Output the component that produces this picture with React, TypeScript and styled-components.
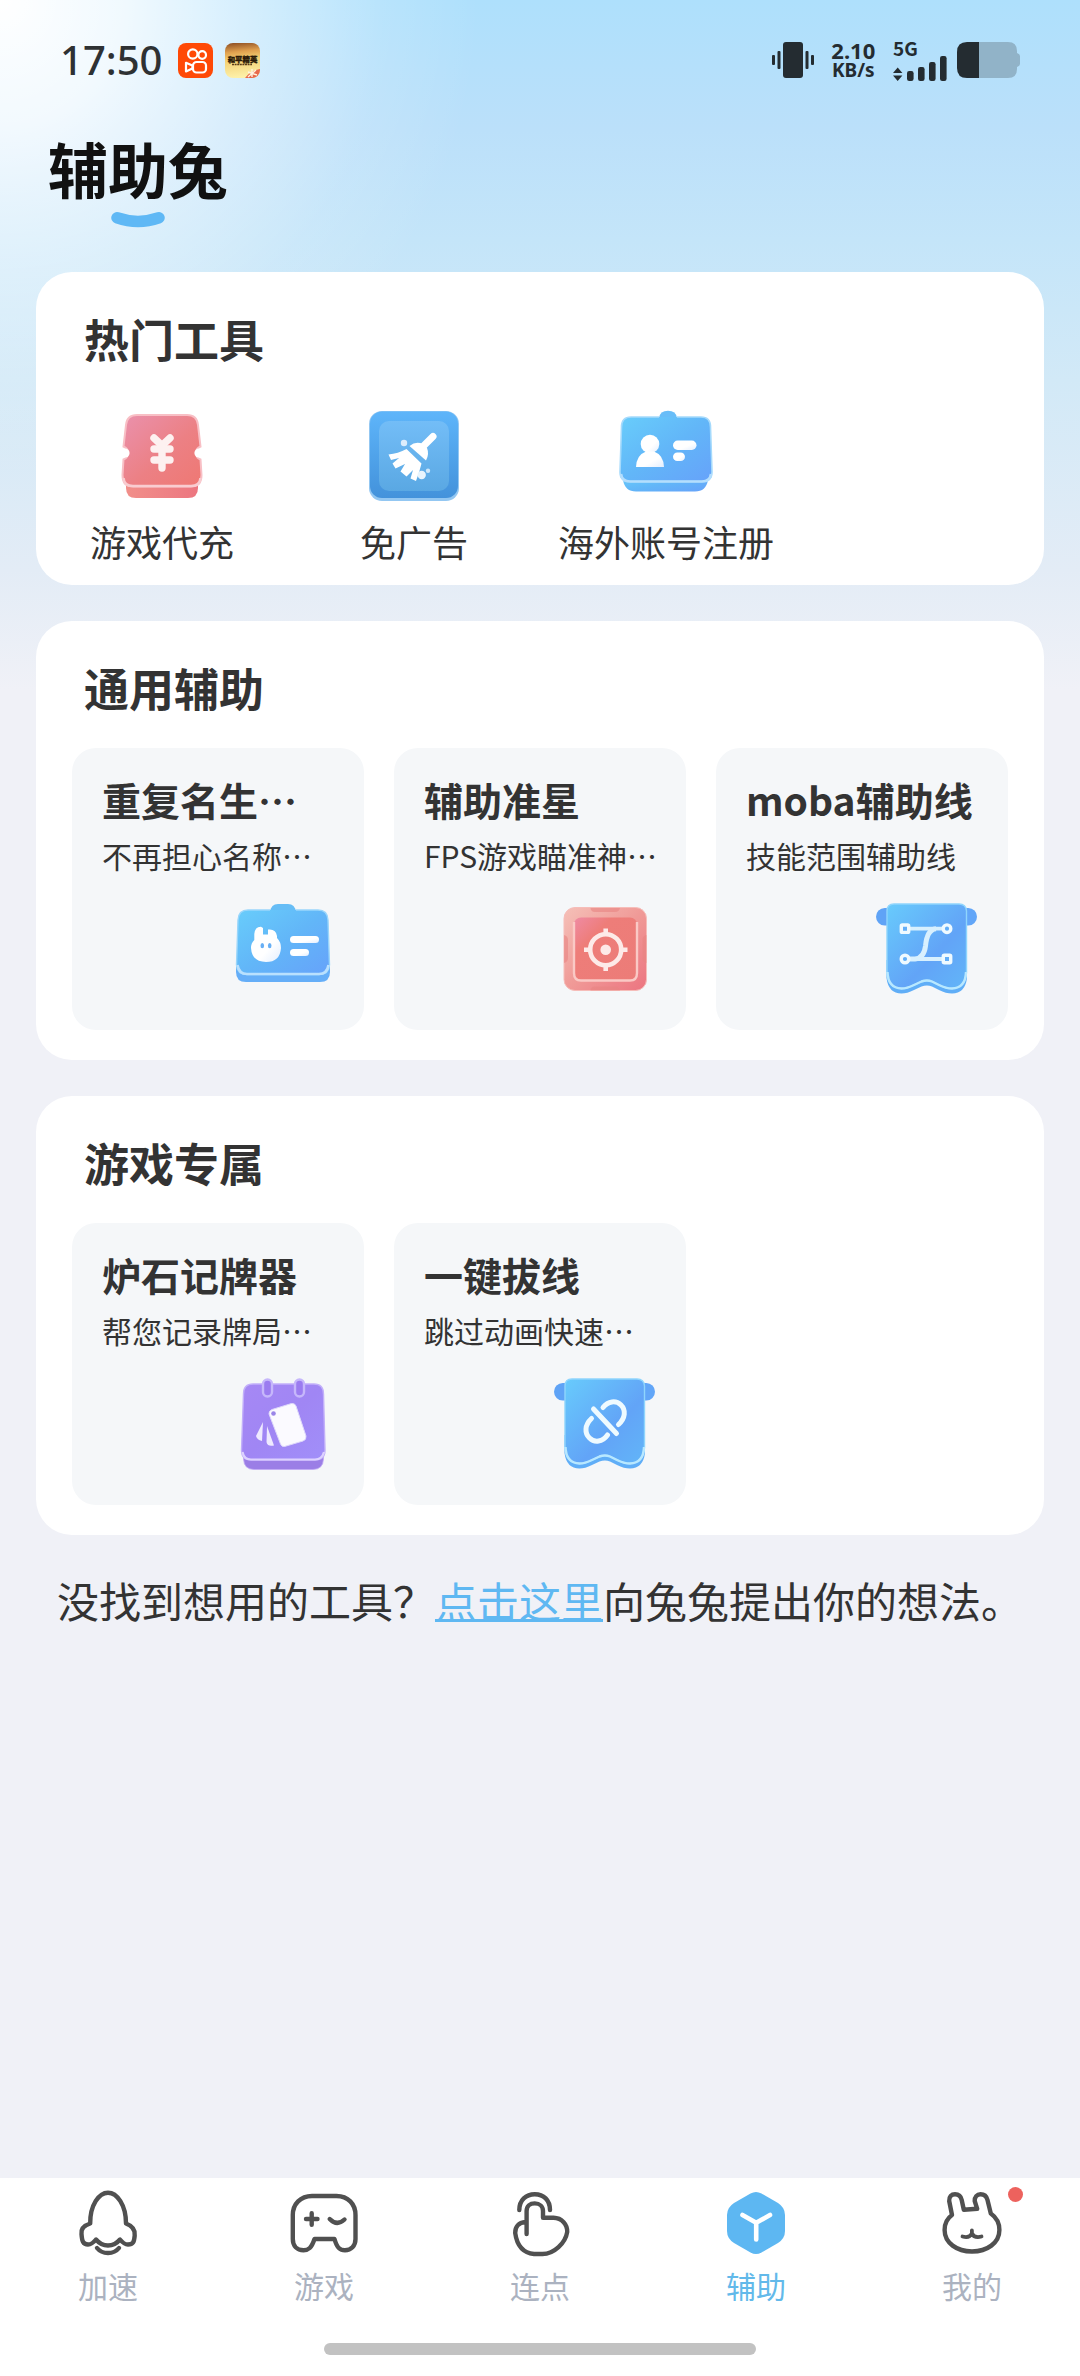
import React from "react";
import styled, { createGlobalStyle } from "styled-components";

const GlobalStyle = createGlobalStyle`
  *, *::before, *::after { box-sizing: border-box; }
  body {
    margin: 0;
    background: #f0f1f7;
    color: #333;
    font-family: "Noto Sans CJK SC", "Noto Sans", sans-serif;
  }
  button {
    margin: 0;
    padding: 0;
    border: 0;
    background: none;
    color: inherit;
    font: inherit;
    cursor: pointer;
  }
  svg { display: block; flex: none; }
`;

const Page = styled.div`
  display: flex;
  flex-direction: column;
  min-height: 100vh;
  background:
    radial-gradient(circle 480px at 0 0, #fff 0%, rgba(255, 255, 255, 0.82) 26%, rgba(255, 255, 255, 0.42) 56%, rgba(255, 255, 255, 0.12) 80%, rgba(255, 255, 255, 0) 100%),
    linear-gradient(180deg, #aee0fc 0, #bbe0fa 130px, #c4e5f9 240px, #d2e9f7 380px, #e3ecf6 570px, #f0f1f7 690px);
`;

/* ---------- status bar ---------- */

const StatusBar = styled.header`
  display: flex;
  align-items: center;
  justify-content: space-between;
  height: 120px;
  padding: 0 60px;
`;

const StatusGroup = styled.div<{ $gap: number }>`
  display: flex;
  align-items: center;
  gap: ${(p) => p.$gap}px;
`;

const Clock = styled.time`
  margin-right: 4px;
  color: #2e3133;
  font-family: "Noto Sans", "Noto Sans CJK SC", sans-serif;
  font-size: 40px;
  font-weight: 500;
  line-height: 48px;
`;

const Speed = styled.div`
  color: #242c31;
  font-family: "Noto Sans", "Noto Sans CJK SC", sans-serif;
  font-size: 19px;
  font-weight: 700;
  line-height: 20px;
  text-align: center;
  white-space: pre-line;

  &::first-line {
    font-size: 22px;
  }
`;

const Signal = styled.div`
  display: flex;
  flex-direction: column;
  color: #242c31;
  font-size: 19px;
  font-weight: 700;
  line-height: 16px;
`;

/* ---------- heading ---------- */

const Heading = styled.div`
  display: flex;
  flex-direction: column;
  align-items: center;
  align-self: flex-start;
  gap: 8px;
  padding: 12px 48px 44px;
`;

const AppTitle = styled.h1`
  margin: 0;
  color: #111;
  font-size: 60px;
  font-weight: 700;
  line-height: 72px;
`;

/* ---------- cards ---------- */

const Content = styled.main`
  display: flex;
  flex: 1;
  flex-direction: column;
  gap: 36px;
  padding: 0 36px;
`;

const Card = styled.section`
  padding: 35px 36px 30px;
  border-radius: 36px;
  background: #fff;
`;

const CardTitle = styled.h2`
  margin: 0 0 28px;
  padding: 0 12px;
  font-size: 45px;
  font-weight: 700;
  line-height: 64px;
`;

const HotCard = styled(Card)`
  padding: 35px 0 20px;
`;

const HotTitle = styled(CardTitle)`
  margin-bottom: 37px;
  padding: 0 48px;
`;

const HotGrid = styled.div`
  display: grid;
  grid-template-columns: repeat(4, 1fr);
`;

const HotTool = styled.button`
  display: flex;
  flex-direction: column;
  align-items: center;
  gap: 13px;
  font-size: 36px;
  line-height: 48px;
  white-space: nowrap;
`;

const TileGrid = styled.div`
  display: grid;
  grid-template-columns: repeat(3, 1fr);
  gap: 30px;
`;

const TileButton = styled.button`
  display: flex;
  flex-direction: column;
  min-width: 0;
  padding: 27px 30px 28px;
  border-radius: 24px;
  background: #f5f7f9;
  text-align: left;
  white-space: nowrap;

  svg {
    align-self: flex-end;
    margin-top: 25px;
  }
`;

const TileName = styled.span`
  font-size: 39px;
  font-weight: 700;
  line-height: 48px;
`;

const TileNote = styled.span`
  margin-top: 12px;
  font-size: 30px;
  line-height: 40px;
`;

const Feedback = styled.p`
  margin: 0;
  font-size: 42px;
  line-height: 58px;
  text-align: center;
`;

const FeedbackLink = styled.a`
  color: #5fb8f2;
  text-decoration: underline;
  text-decoration-thickness: 3px;
  text-underline-offset: 1px;
`;

/* ---------- tab bar ---------- */

const Footer = styled.footer`
  display: flex;
  flex-direction: column;
  align-items: center;
  gap: 38px;
  padding: 10px 0 21px;
  background: #fff;
`;

const TabBar = styled.nav`
  display: grid;
  grid-template-columns: repeat(5, 1fr);
  width: 100%;
`;

const Tab = styled.button<{ $active?: boolean }>`
  display: flex;
  flex-direction: column;
  align-items: center;
  gap: 5px;
  color: ${(p) => (p.$active ? "#62b9ea" : "#abb2c0")};
  font-size: 30px;
  line-height: 40px;
`;

const TabIcon = styled.span`
  position: relative;
`;

const Badge = styled.span`
  position: absolute;
  top: -1px;
  right: -15px;
  width: 15px;
  height: 15px;
  border-radius: 50%;
  background: #ed625d;
`;

const HomeIndicator = styled.div`
  width: 40%;
  height: 12px;
  border-radius: 6px;
  background: #c2c2c2;
`;

/* ---------- status icons ---------- */

const VideoAppIcon = () => (
  <svg width="35" height="35" viewBox="0 0 35 35" aria-hidden="true">
    <rect width="35" height="35" rx="8" fill="#ff4906" />
    <g fill="none" stroke="#fff" strokeWidth="2.2" strokeLinejoin="round">
      <circle cx="14.8" cy="11" r="4.7" />
      <circle cx="24.2" cy="12" r="3.8" />
      <rect x="15" y="19" width="13" height="10.5" rx="3.6" />
      <path d="M8 19.8V28.4L14.4 25.4V22.6Z" />
    </g>
  </svg>
);

const GameAppIcon = () => (
  <svg width="35" height="35" viewBox="0 0 35 35" aria-hidden="true">
    <defs>
      <linearGradient id="gameBg" x1="0" y1="0" x2="0.1" y2="1">
        <stop offset="0" stopColor="#8a4b22" />
        <stop offset="0.28" stopColor="#e0a04e" />
        <stop offset="0.5" stopColor="#f3cf72" />
        <stop offset="1" stopColor="#fdf0a8" />
      </linearGradient>
      <clipPath id="gameClip"><rect width="35" height="35" rx="8" /></clipPath>
    </defs>
    <g clipPath="url(#gameClip)">
      <rect width="35" height="35" fill="url(#gameBg)" />
      <path d="M35 26Q25 28 20 35H35Z" fill="#e8694c" />
      <path d="M27 26V34M23 29L32 32M31 27L23 34" stroke="#fff3e0" strokeWidth="1.4" />
      <text x="17.5" y="18.5" textAnchor="middle" fontSize="7.4" fontWeight="900" fill="#2b1a08" stroke="#2b1a08" strokeWidth="0.4">和平精英</text>
      <path d="M7 21.5H27" stroke="#5a3c18" strokeWidth="1.6" strokeDasharray="2 0.6" />
    </g>
  </svg>
);

const VibrateIcon = () => (
  <svg width="42" height="36" viewBox="0 0 42 36" fill="#242c31" aria-hidden="true">
    <rect x="11" width="20" height="36" rx="3" />
    <rect y="13" width="3" height="10" rx="1" />
    <rect x="5.5" y="9" width="3" height="18" rx="1" />
    <rect x="33.5" y="9" width="3" height="18" rx="1" />
    <rect x="39" y="13" width="3" height="10" rx="1" />
  </svg>
);

const SignalBars = () => (
  <svg width="54" height="25" viewBox="0 0 54 25" fill="#242c31" aria-hidden="true">
    <path d="M0 17L4.7 11.5L9.4 17ZM0 19.5L4.7 25L9.4 19.5Z" />
    <rect x="14" y="15" width="6.6" height="10" rx="2.2" />
    <rect x="25" y="11" width="6.6" height="14" rx="2.2" />
    <rect x="36" y="6" width="6.6" height="19" rx="2.2" />
    <rect x="47" y="0" width="6.6" height="25" rx="2.2" />
  </svg>
);

const BatteryIcon = () => (
  <svg width="63" height="36" viewBox="0 0 63 36" aria-hidden="true">
    <path d="M22 0H51Q60 0 60 9V11Q63 12 63 14V22Q63 24 60 25V27Q60 36 51 36H22Z" fill="#91b3c8" />
    <path d="M22 0V36H10Q0 36 0 26V10Q0 0 10 0Z" fill="#242c31" />
  </svg>
);

const Smile = () => (
  <svg width="56" height="16" viewBox="0 0 56 16" aria-hidden="true">
    <path d="M7 5.8Q28 13 49 5.8" fill="none" stroke="#5fb8f5" strokeWidth="11.5" strokeLinecap="round" />
  </svg>
);

/* ---------- shared gradients for the tool icons ---------- */

const GradientSheet = styled.svg`
  position: absolute;
`;

const Gradients = () => (
  <GradientSheet width="0" height="0" aria-hidden="true">
    <defs>
      <linearGradient id="rose" x1="0" y1="0" x2="1" y2="1">
        <stop offset="0" stopColor="#ea91ad" />
        <stop offset="0.55" stopColor="#ec8084" />
        <stop offset="1" stopColor="#ef7873" />
      </linearGradient>
      <linearGradient id="roseBase" x1="0" y1="0" x2="1" y2="0">
        <stop offset="0" stopColor="#f18f8a" />
        <stop offset="1" stopColor="#ec7680" />
      </linearGradient>
      <linearGradient id="roseFrame" x1="0" y1="0" x2="1" y2="1">
        <stop offset="0" stopColor="#f5c0b8" />
        <stop offset="0.5" stopColor="#f09a97" />
        <stop offset="1" stopColor="#ec7480" />
      </linearGradient>
      <linearGradient id="roseFace" x1="0" y1="0" x2="1" y2="1">
        <stop offset="0" stopColor="#ef8ba4" />
        <stop offset="0.3" stopColor="#ee7d79" />
        <stop offset="1" stopColor="#ec7c78" />
      </linearGradient>
      <linearGradient id="sky" x1="0" y1="0" x2="1" y2="1">
        <stop offset="0" stopColor="#68cdfb" />
        <stop offset="0.5" stopColor="#62b6f8" />
        <stop offset="1" stopColor="#66a2fa" />
      </linearGradient>
      <linearGradient id="banner" x1="0" y1="0" x2="1" y2="1">
        <stop offset="0" stopColor="#68cbfc" />
        <stop offset="0.6" stopColor="#62a4f7" />
        <stop offset="1" stopColor="#62b5f8" />
      </linearGradient>
      <linearGradient id="frame" x1="0" y1="0" x2="0" y2="1">
        <stop offset="0" stopColor="#5eb5fa" />
        <stop offset="1" stopColor="#4392db" />
      </linearGradient>
      <linearGradient id="pane" x1="0" y1="0" x2="0" y2="1">
        <stop offset="0" stopColor="#73bdf7" />
        <stop offset="1" stopColor="#5aa8e3" />
      </linearGradient>
      <linearGradient id="violet" x1="0" y1="0" x2="1" y2="1">
        <stop offset="0" stopColor="#a688f4" />
        <stop offset="0.5" stopColor="#a086f4" />
        <stop offset="1" stopColor="#a18ff9" />
      </linearGradient>
      <linearGradient id="paper" x1="0" y1="0" x2="1" y2="1">
        <stop offset="0" stopColor="#fff" />
        <stop offset="0.6" stopColor="#fff" />
        <stop offset="1" stopColor="#e3eefe" />
      </linearGradient>
    </defs>
  </GradientSheet>
);

/* ---------- hot tool icons ---------- */

const TicketIcon = () => (
  <svg width="96" height="96" viewBox="0 0 96 96" aria-hidden="true">
    <path d="M12 70H84V80Q84 90 74 90H22Q12 90 12 80Z" fill="url(#roseBase)" />
    <path
      d="M23 7H73Q83 7 84 17L86.5 38.5A7 7 0 0 0 86.5 51.5L87.5 67Q87.5 78.5 77 78.5H19Q8.5 78.5 8.5 67L9.5 51.5A7 7 0 0 0 9.5 38.5L12 17Q13 7 23 7Z"
      fill="url(#rose)"
      stroke="#f8bfc5"
      strokeWidth="2"
    />
    <path d="M9.5 70Q10 78 19 78H77Q86 78 86.5 70" fill="none" stroke="#f9ccd0" strokeWidth="2.6" />
    <circle cx="11" cy="45" r="4.6" fill="#fff" />
    <circle cx="85" cy="45" r="4.6" fill="#fff" />
    <g stroke="#fdf1f0" strokeWidth="7.4" strokeLinecap="round" strokeLinejoin="round" fill="none">
      <path d="M40 30L48 37.5L56 30" />
      <path d="M48 38V60" />
      <path d="M40 41H56M40 52H56" />
    </g>
  </svg>
);

const BroomIcon = () => (
  <svg width="96" height="96" viewBox="0 0 96 96" aria-hidden="true">
    <rect x="3" y="3" width="90" height="90" rx="13" fill="#93c7f2" />
    <rect x="4" y="3.5" width="88" height="86.5" rx="12" fill="url(#frame)" />
    <rect x="13" y="13" width="70" height="70" rx="10" fill="url(#pane)" />
    <g fill="#fff">
      <path d="M67 28.5L58 37.5" stroke="#fff" strokeWidth="7" strokeLinecap="round" />
      <path d="M43.5 38Q50 32.5 57 36L61 40Q63.5 46 60 52.5Z" />
      <path d="M40.5 41L55.5 55.5Q53.5 64 50 73L44.5 70.5L47 62L40.5 68.5L34.5 63.5L39 56L29.5 60.5L26.5 55.5L33 50L25 52L22.5 46.5Q32 45.5 40.5 41Z" />
      <circle cx="38" cy="35" r="3.2" fill="#dcedfc" />
      <circle cx="55.7" cy="67" r="4.2" fill="#e8f4fd" />
      <circle cx="62" cy="62.8" r="2.2" fill="#cde6fa" />
    </g>
  </svg>
);

const IdCardIcon = () => (
  <svg width="96" height="96" viewBox="0 0 96 96" aria-hidden="true">
    <path d="M5 68H90V72Q88 83.5 77 83.5H18Q7 83.5 5 72Z" fill="url(#sky)" />
    <path d="M41 10Q42 2.7 50 2.7T59 10V14H41Z" fill="#68bdf8" />
    <path d="M13 9H83Q92.5 9 92.5 19L94 65Q94 74 84 74H12Q2 74 2 65L3.5 19Q3.5 9 13 9Z" fill="url(#sky)" />
    <path d="M41 9H13Q3.5 9 3.5 19L2 64Q2 73.5 12 73.5H84Q94 73.5 94 64L92.5 19Q92.5 9 83 9H59" fill="none" stroke="#a5dafc" strokeWidth="1.6" />
    <path d="M3 66Q4 73.5 12 73.5H84Q92 73.5 93 66" fill="none" stroke="#b4defd" strokeWidth="2.6" />
    <g fill="url(#paper)">
      <circle cx="32" cy="36" r="9.3" />
      <path d="M18 59Q18.5 47 28 43.5H36Q45.5 47 46 59Z" />
      <rect x="55" y="32.5" width="23.5" height="9.5" rx="4.7" />
      <rect x="55" y="44.5" width="12" height="8.6" rx="4.3" />
    </g>
  </svg>
);

/* ---------- tile icons ---------- */

const RabbitCardIcon = () => (
  <svg width="102" height="102" viewBox="0 0 102 102" aria-hidden="true">
    <path d="M4 62H98V72Q98 82 88 82H14Q4 82 4 72Z" fill="#65aef8" />
    <path d="M38 12Q39 4 46 4H56Q63 4 64 12Z" fill="#66bdf6" />
    <path d="M16 10H86Q95.5 10 96 20L97.5 65Q97 75 87 75H15Q5 75 4.5 65L6 20Q6.5 10 16 10Z" fill="url(#sky)" />
    <path d="M38 10H16Q6.5 10 6 20L4.5 65Q5 74.5 15 74.5H87Q97 74.5 97.5 65L96 20Q95.5 10 86 10H64" fill="none" stroke="#9ad6fb" strokeWidth="1.4" />
    <path d="M5.5 65Q7 74 15 74H87Q95 74 96.5 65" fill="none" stroke="#b9e0fe" strokeWidth="2.6" />
    <g fill="url(#paper)">
      <path d="M22.3 40V34Q23 26.5 29 26.7L31 28V34.5H36V29.5Q44 28.5 45 36V38Q49 42 49 48Q48 62 34 62T19 48Q19 43 22.3 40Z" />
      <rect x="58" y="36" width="29" height="7" rx="3.5" />
      <rect x="58" y="49" width="19" height="7" rx="3.5" />
    </g>
    <ellipse cx="30.3" cy="45.7" rx="1.8" ry="2.6" fill="#67aff5" />
    <ellipse cx="37.7" cy="45.7" rx="1.8" ry="2.6" fill="#67aff5" />
  </svg>
);

const CrosshairIcon = () => (
  <svg width="102" height="102" viewBox="0 0 102 102" aria-hidden="true">
    <rect x="10" y="7.5" width="82.5" height="83" rx="11" fill="url(#roseFrame)" stroke="#f6bdb9" strokeWidth="1" />
    <g fill="#e98583" opacity="0.6">
      <path d="M36.5 8H66Q65 12 61 12H41Q37 12 36.5 8Z" />
      <path d="M36.5 90.5H66Q65 86.5 61 86.5H41Q37 86.5 36.5 90.5Z" />
      <path d="M10 35V63Q14 62 14 58V40Q14 36 10 35Z" />
      <path d="M92.5 35V63Q88.5 62 88.5 58V40Q88.5 36 92.5 35Z" />
    </g>
    <rect x="20" y="17.5" width="63" height="63" rx="7" fill="url(#roseFace)" />
    <path d="M20 22V73Q20 80.5 27 80.5H76Q83 80.5 83 73V22" fill="none" stroke="#fac9c5" strokeWidth="2.4" />
    <g fill="none" stroke="#fdeae8" strokeWidth="4.6">
      <circle cx="51.7" cy="49.7" r="15.5" />
      <path d="M51.7 28.5V36M51.7 63.5V71M30 49.7H37.5M66 49.7H73.5" />
    </g>
    <circle cx="51.7" cy="49.7" r="5.3" fill="#fde9e7" />
  </svg>
);

const BannerShape = () => (
  <>
    <rect x="0" y="8" width="20" height="17.5" rx="8.7" fill="#5fa3f6" />
    <rect x="81" y="8" width="20" height="17.5" rx="8.7" fill="#62a6f8" />
    <path d="M10.5 60H91V78Q89 93.5 76 93.5Q70 93.5 63 90L56 86.5Q51 84.5 45.5 86.5L38 90Q31 93.5 25.5 93.5Q12.5 93.5 10.5 78Z" fill="#60aef7" />
    <path d="M18 4H83Q90 4 90.5 11V72Q90 88 76 88.5Q70 88.5 63 85L56 81.5Q51 79.5 45.5 81.5L38 85Q31 88.5 25.5 88.5Q11.5 88 11 72V11Q11 4 18 4Z" fill="url(#banner)" stroke="#8fd5fd" strokeWidth="1.4" />
    <path d="M11.5 72Q12 88 25.5 88.5Q31 88.5 38 85L45.5 81.5Q51 79.5 56 81.5L63 85Q70 88.5 76 88.5Q89.5 88 90 72" fill="none" stroke="#b8e8ff" strokeWidth="2.4" />
  </>
);

const PathBannerIcon = () => (
  <svg width="102" height="102" viewBox="0 0 102 102" aria-hidden="true">
    <BannerShape />
    <g fill="none" stroke="#d8f0fe" strokeWidth="3.8">
      <path d="M33 28.7H67M33 59H67" />
      <path d="M33 59H39Q48 58 49.5 46Q51 29.5 60 28.7" strokeWidth="5" />
    </g>
    <g fill="#62aef8" stroke="#effaff" strokeWidth="3.4">
      <rect x="25.3" y="25" width="7.4" height="7.4" rx="1" />
      <circle cx="71" cy="28.7" r="3.8" />
      <circle cx="29" cy="59" r="3.8" />
      <rect x="67.3" y="55.3" width="7.4" height="7.4" rx="1" />
    </g>
  </svg>
);

const UnlinkBannerIcon = () => (
  <svg width="102" height="102" viewBox="0 0 102 102" aria-hidden="true">
    <BannerShape />
    <g fill="none" stroke="#eefaff" strokeWidth="5" strokeLinecap="round">
      <path d="M39.5 34L62.5 58.5" />
      <path d="M49 32.5C54 26 62 25 67 30S71.5 43 64.5 49.5" />
      <path d="M53.5 60C48.5 67 40.5 68 35.5 63S30.5 50 37.5 43.5" />
    </g>
  </svg>
);

const CardNotesIcon = () => (
  <svg width="102" height="102" viewBox="0 0 102 102" aria-hidden="true">
    <path d="M11.5 72H91.5V84Q91 94.5 81 94.5H22Q12 94.5 11.5 84Z" fill="#9b7ee6" stroke="#c0aaf5" strokeWidth="0.8" />
    <path d="M21 9H82Q91.5 9 91.5 19L93 75Q93 85 83 85H19Q9.5 85 9.5 75L11.5 19Q11.5 9 21 9Z" fill="url(#violet)" stroke="#c2b0fa" strokeWidth="1.4" />
    <path d="M10.5 77Q12 84.5 19 84.5H83Q90 84.5 92 77" fill="none" stroke="#ddd2ff" strokeWidth="2.2" />
    <g fill="#9b7cf0" stroke="#c6b7fb" strokeWidth="2.4">
      <rect x="31" y="4.5" width="9" height="17" rx="4.5" />
      <rect x="63" y="4.5" width="9" height="17" rx="4.5" />
    </g>
    <path d="M31 47L30 66Q25 65 24 61Z" fill="#efeaff" />
    <path d="M35 51L42 70.5Q35.5 72 34.5 67Z" fill="#efeaff" />
    <path d="M40 34.5L59.5 28.5Q63 28 64 31L74 61Q74.5 65 71 66L52.5 71.5Q49.5 72 48.5 69L37 39Q36.5 36 40 34.5Z" fill="#fbfaff" stroke="#ded8fb" strokeWidth="1" />
    <circle cx="41.5" cy="38.5" r="2.3" fill="#9a85e8" />
  </svg>
);

/* ---------- tab icons ---------- */

const LineIcon = ({ children }: { children: React.ReactNode }) => (
  <svg
    width="72"
    height="72"
    viewBox="0 0 72 72"
    fill="none"
    stroke="#505050"
    strokeWidth="4.4"
    strokeLinecap="round"
    strokeLinejoin="round"
    aria-hidden="true"
  >
    {children}
  </svg>
);

const RocketIcon = () => (
  <LineIcon>
    <path d="M18.2 35.5C18 17 27 4.7 36 4.7S54 17 54 35.5C60.5 38 63.5 41.5 62.7 47.5C62.2 54 61 56.5 56 56.5C52 56.5 50 54 48 51.5Q43 57.5 36 57.5T24 51.5C22 54 20 56.5 16 56.5C11 56.5 10 53 9.5 46C8.8 41 12 37.5 18.2 35.5Z" />
    <path d="M25 60Q29 65 36 65T47 60" />
  </LineIcon>
);

const GamepadIcon = () => (
  <LineIcon>
    <path d="M24 8H48.5C60 8 67.5 16 67.5 27V51C67.5 58 63 62.2 57 62.2C52 62.2 49 60 46.5 51H26.5C23.5 60 20.5 62.2 15.5 62.2C9 62.2 4.8 58 4.8 51V27C4.8 16 12.5 8 24 8Z" />
    <path d="M18 31H29.5M23.7 25.2V36.8" />
    <path d="M41.7 31Q49 38.5 56.5 31.5" />
  </LineIcon>
);

const TapIcon = () => (
  <LineIcon>
    <path d="M15.3 22C15.3 12 22 6.2 30.8 6.2S46 12 46 22" />
    <path d="M22.6 46V23C22.6 18 26 15.4 30.8 15.4S39 18.5 39 23V29.8H49.5C58 30 63.5 36.5 63.2 44C61.5 55 50 66 38.5 66H30C20 65 13 58 11.2 45C11 39 14.5 34.5 21.5 34" />
  </LineIcon>
);

const CubeIcon = () => (
  <svg width="72" height="72" viewBox="0 0 72 72" aria-hidden="true">
    <path d="M30.5 5.5Q36 2.5 41.5 5.5L58 15Q65 19.5 65 27V43Q65 50.5 58 55L41.5 64.5Q36 67.5 30.5 64.5L14 55Q7 50.5 7 43V27Q7 19.5 14 15Z" fill="#5db7f2" />
    <path d="M22.5 27L36.2 34.8L50 27M36.2 34.8V51.5" fill="none" stroke="#fff" strokeWidth="4.6" strokeLinecap="round" strokeLinejoin="round" />
  </svg>
);

const RabbitIcon = () => (
  <LineIcon>
    <path d="M16 27L13.2 13C12.8 8.5 15.5 6.2 19 6.2S25 8.5 25.7 12L27.8 21.8L41.2 20.8L38.7 13C38.5 9 41 6.2 44.5 6.2C48.5 6.2 50.5 8 51.5 12L54.8 25.5C60.5 29.5 63.4 35 63.4 42C63.4 55 51 63.5 36 63.5S8.6 55 8.6 42C8.6 36 11 30.5 16 27Z" />
    <path d="M26.5 48.5Q33.5 50.5 35.9 45.5V42.5V45.5Q38.5 50.5 45.5 48.5" strokeWidth="3.8" />
  </LineIcon>
);

/* ---------- page ---------- */

type Tool = { name: string; icon: React.ReactNode };
type TileItem = Tool & { note: string };

const hotTools: Tool[] = [
  { name: "游戏代充", icon: <TicketIcon /> },
  { name: "免广告", icon: <BroomIcon /> },
  { name: "海外账号注册", icon: <IdCardIcon /> },
];

const sections: { title: string; tiles: TileItem[] }[] = [
  {
    title: "通用辅助",
    tiles: [
      { name: "重复名生…", note: "不再担心名称…", icon: <RabbitCardIcon /> },
      { name: "辅助准星", note: "FPS游戏瞄准神…", icon: <CrosshairIcon /> },
      { name: "moba辅助线", note: "技能范围辅助线", icon: <PathBannerIcon /> },
    ],
  },
  {
    title: "游戏专属",
    tiles: [
      { name: "炉石记牌器", note: "帮您记录牌局…", icon: <CardNotesIcon /> },
      { name: "一键拔线", note: "跳过动画快速…", icon: <UnlinkBannerIcon /> },
    ],
  },
];

const tabs: (Tool & { active?: boolean; badge?: boolean })[] = [
  { name: "加速", icon: <RocketIcon /> },
  { name: "游戏", icon: <GamepadIcon /> },
  { name: "连点", icon: <TapIcon /> },
  { name: "辅助", icon: <CubeIcon />, active: true },
  { name: "我的", icon: <RabbitIcon />, badge: true },
];

export default function App() {
  return (
    <Page lang="zh-CN">
      <GlobalStyle />
      <Gradients />
      <StatusBar>
        <StatusGroup $gap={12}>
          <Clock>17:50</Clock>
          <VideoAppIcon />
          <GameAppIcon />
        </StatusGroup>
        <StatusGroup $gap={15}>
          <VibrateIcon />
          <Speed>{"2.10\nKB/s"}</Speed>
          <StatusGroup $gap={10}>
            <Signal>
              5G
              <SignalBars />
            </Signal>
            <BatteryIcon />
          </StatusGroup>
        </StatusGroup>
      </StatusBar>

      <Heading>
        <AppTitle>辅助兔</AppTitle>
        <Smile />
      </Heading>

      <Content>
        <HotCard>
          <HotTitle>热门工具</HotTitle>
          <HotGrid>
            {hotTools.map((tool) => (
              <HotTool key={tool.name} type="button">
                {tool.icon}
                {tool.name}
              </HotTool>
            ))}
          </HotGrid>
        </HotCard>

        {sections.map((section) => (
          <Card key={section.title}>
            <CardTitle>{section.title}</CardTitle>
            <TileGrid>
              {section.tiles.map((tile) => (
                <TileButton key={tile.name} type="button">
                  <TileName>{tile.name}</TileName>
                  <TileNote>{tile.note}</TileNote>
                  {tile.icon}
                </TileButton>
              ))}
            </TileGrid>
          </Card>
        ))}

        <Feedback>
          没找到想用的工具？<FeedbackLink href="#feedback">点击这里</FeedbackLink>向兔兔提出你的想法。
        </Feedback>
      </Content>

      <Footer>
        <TabBar>
          {tabs.map((tab) => (
            <Tab key={tab.name} type="button" $active={tab.active} aria-current={tab.active ? "page" : undefined}>
              <TabIcon>
                {tab.icon}
                {tab.badge && <Badge />}
              </TabIcon>
              {tab.name}
            </Tab>
          ))}
        </TabBar>
        <HomeIndicator />
      </Footer>
    </Page>
  );
}
